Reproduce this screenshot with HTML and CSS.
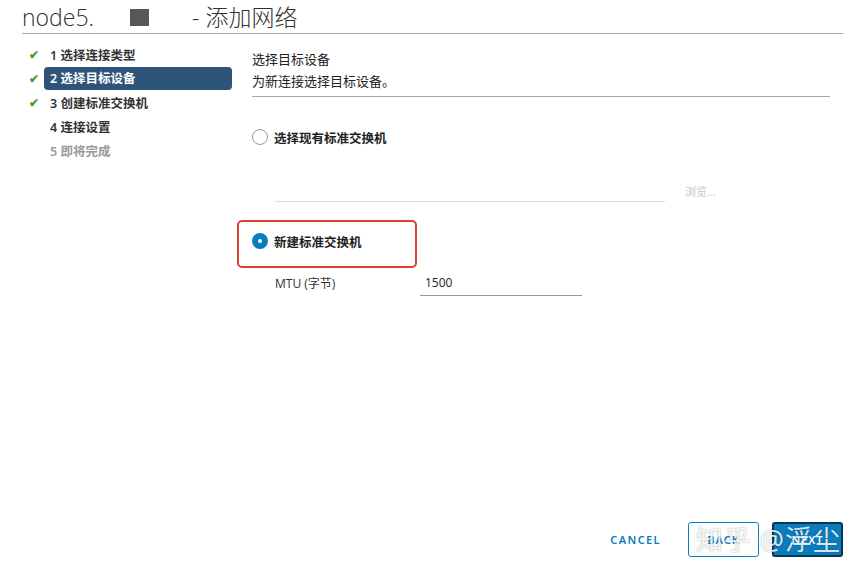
FILE: index.html
```html
<!DOCTYPE html>
<html lang="zh-CN">
<head>
    <meta charset="UTF-8">
    <title>添加网络</title>
    <link rel="stylesheet" href="styles.css">
</head>
<body>
    <div class="wizard">
        <div class="header">
            <span>node5.</span><span class="mask"><span class="blot"></span></span><span>- 添加网络</span>
        </div>
        <div class="body">
            <ul class="steps">
                <li class="done"><span class="check">✔</span>1 选择连接类型</li>
                <li class="done active"><span class="check">✔</span><span class="pill">2 选择目标设备</span></li>
                <li class="done"><span class="check">✔</span>3 创建标准交换机</li>
                <li><span class="check"></span>4 连接设置</li>
                <li class="disabled"><span class="check"></span>5 即将完成</li>
            </ul>
            <div class="content">
                <div class="page-title">选择目标设备</div>
                <div class="page-desc">为新连接选择目标设备。</div>
                <div class="option">
                    <span class="radio"></span>
                    <span class="opt-label">选择现有标准交换机</span>
                </div>
                <div class="browse-row">
                    <div class="browse-input"></div>
                    <span class="browse">浏览...</span>
                </div>
                <div class="highlight">
                    <div class="option checked">
                        <span class="radio"></span>
                        <span class="opt-label">新建标准交换机</span>
                    </div>
                </div>
                <div class="mtu">
                    <span class="mtu-label">MTU (字节)</span>
                    <span class="mtu-input">1500</span>
                </div>
            </div>
        </div>
        <div class="footer">
            <span class="link-btn">CANCEL</span>
            <span class="btn outline">BACK</span>
            <span class="btn primary">NEXT</span>
            <span class="watermark">知乎 @浮尘</span>
        </div>
    </div>
</body>
</html>
```

FILE: styles.css
```css
body {
    margin: 0;
    padding: 0;
    background: #fff;
    font-family: "Noto Sans", "Noto Sans CJK SC", sans-serif;
    color: #333;
}
.wizard {
    width: 862px;
    height: 576px;
    position: relative;
    overflow: hidden;
}
.header {
    margin: 0 19px 0 22px;
    height: 33px;
    border-bottom: 1px solid #a8a8a8;
    font-family: "Open Sans", "Noto Sans CJK SC", sans-serif;
    font-weight: 300;
    font-size: 23px;
    line-height: 32px;
    color: #313131;
    display: flex;
    align-items: center;
}
.mask {
    display: inline-block;
    width: 98px;
    height: 20px;
}
.blot {
    display: block;
    width: 19px;
    height: 17px;
    margin: 2px 0 0 36px;
    background: #575757;
}
.body {
    display: flex;
    padding-top: 8px;
}
.steps {
    list-style: none;
    margin: 0;
    padding: 0 0 0 29px;
    width: 204px;
    flex-shrink: 0;
}
.steps li {
    height: 24px;
    display: flex;
    align-items: center;
    font-size: 12.5px;
    font-weight: 600;
    color: #333;
}
.check {
    width: 21px;
    font-size: 12px;
    color: #4c9a2a;
}
.steps li .pill {
    margin-left: -6px;
    padding-left: 6px;
    width: 182px;
    height: 23px;
    line-height: 23px;
    background: #2f5479;
    color: #fff;
    border-radius: 4px;
}
.steps li.disabled {
    color: #9a9a9a;
}
.content {
    padding-left: 19px;
    width: 578px;
}
.page-title {
    font-size: 13px;
    line-height: 16px;
    padding-top: 9px;
    color: #222;
}
.page-desc {
    font-size: 13px;
    line-height: 16px;
    padding-top: 6px;
    padding-bottom: 7px;
    border-bottom: 1px solid #a8a8a8;
    color: #222;
}
.option {
    display: flex;
    align-items: center;
    margin-top: 31px;
    height: 18px;
}
.radio {
    width: 14px;
    height: 14px;
    border: 1px solid #9a9a9a;
    border-radius: 50%;
    box-sizing: content-box;
    margin-right: 6px;
}
.option.checked .radio {
    width: 4px;
    height: 4px;
    border: 6px solid #0a7dc1;
    background: #fff;
}
.opt-label {
    font-size: 12.5px;
    font-weight: 600;
    color: #222;
}
.browse-row {
    display: flex;
    align-items: flex-end;
    margin-left: 23px;
    margin-top: 40px;
}
.browse-input {
    width: 390px;
    height: 1px;
    background: #dcdcdc;
}
.browse {
    font-size: 11px;
    color: #c6c6c6;
    margin-left: 20px;
    position: relative;
    top: -3px;
}
.highlight {
    margin-left: -15px;
    margin-top: 18px;
    width: 163px;
    height: 44px;
    border: 2px solid #d9432f;
    border-radius: 5px;
    padding-left: 13px;
}
.highlight .option {
    margin-top: 10px;
}
.mtu {
    display: flex;
    align-items: flex-end;
    margin-top: 2px;
    margin-left: 23px;
    height: 26px;
}
.mtu-label {
    width: 145px;
    font-size: 12px;
    color: #333;
    padding-bottom: 4px;
    font-family: "Open Sans", "Noto Sans CJK SC", sans-serif;
}
.mtu-input {
    width: 157px;
    padding-left: 5px;
    font-size: 12px;
    color: #222;
    border-bottom: 1px solid #9a9a9a;
    padding-bottom: 4px;
    font-family: "Open Sans", sans-serif;
}
.footer {
    position: absolute;
    right: 19px;
    bottom: 19px;
    display: flex;
    align-items: center;
}
.link-btn {
    font-size: 11px;
    font-weight: 600;
    letter-spacing: 1.4px;
    color: #0a7dc1;
    margin-right: 27px;
}
.btn {
    width: 71px;
    height: 35px;
    box-sizing: border-box;
    border-radius: 3px;
    font-size: 11px;
    font-weight: 600;
    letter-spacing: 1px;
    display: flex;
    align-items: center;
    justify-content: center;
}
.btn.outline {
    border: 1px solid #0a7dc1;
    color: #0a7dc1;
    margin-right: 13px;
}
.btn.primary {
    background: #0a7dc1;
    border: 2px solid #0b3551;
    color: #fff;
}
.watermark {
    position: absolute;
    right: 2px;
    top: 0;
    font-size: 27px;
    line-height: 35px;
    color: rgba(255, 255, 255, 0.85);
    text-shadow: 0 0 2px rgba(0, 0, 0, 0.35);
    letter-spacing: 1px;
}
```
